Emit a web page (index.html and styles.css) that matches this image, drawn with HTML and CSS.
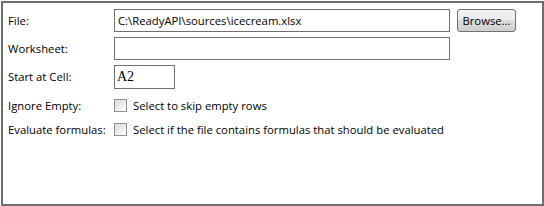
FILE: index.html
```html
<!DOCTYPE html>
<html>
<head>
<meta charset="utf-8">
<link rel="stylesheet" href="styles.css">
</head>
<body>
<div class="panel">
  <div class="form">
    <div class="label">File:</div>
    <div class="field file-row">
      <div class="input wide">C:\ReadyAPI\sources\icecream.xlsx</div>
      <div class="button">Browse...</div>
    </div>

    <div class="label">Worksheet:</div>
    <div class="field">
      <div class="input wide"></div>
    </div>

    <div class="label">Start at Cell:</div>
    <div class="field">
      <div class="input cell">A2</div>
    </div>

    <div class="label check-label">Ignore Empty:</div>
    <div class="field check-field">
      <span class="checkbox"></span>
      <span class="check-text">Select to skip empty rows</span>
    </div>

    <div class="label check-label">Evaluate formulas:</div>
    <div class="field check-field">
      <span class="checkbox"></span>
      <span class="check-text">Select if the file contains formulas that should be evaluated</span>
    </div>
  </div>
</div>
</body>
</html>
```

FILE: styles.css
```css
html, body {
  margin: 0;
  padding: 0;
  background: #ffffff;
}
body {
  font-family: "Open Sans", "Noto Sans", sans-serif;
  font-size: 11.3px;
  color: #000000;
}
.panel {
  margin: 1px 0 0 1px;
  width: 543px;
  height: 205px;
  box-sizing: border-box;
  border: 2px solid #6d6d6d;
  background: #ffffff;
  padding: 6px 0 0 5px;
}
.form {
  display: grid;
  grid-template-columns: 106px auto;
  grid-auto-rows: auto;
  row-gap: 0;
}
.label {
  height: 28px;
  display: flex;
  align-items: center;
  padding-bottom: 5px;
  box-sizing: border-box;
  white-space: nowrap;
}
.field {
  height: 28px;
  display: flex;
  align-items: flex-start;
}
.file-row {
  gap: 7px;
}
.input {
  box-sizing: border-box;
  height: 23px;
  border: 1px solid #707070;
  background: #ffffff;
  display: flex;
  align-items: center;
  padding: 0 0 1px 3px;
  white-space: nowrap;
}
.wide {
  width: 336px;
}
.cell {
  width: 61px;
  height: 24px;
  font-family: "Liberation Serif", serif;
  font-size: 14px;
  padding-left: 2px;
}
.button {
  box-sizing: border-box;
  width: 59px;
  height: 23px;
  border: 1px solid #707070;
  border-radius: 3px;
  background: linear-gradient(#f2f2f2 0%, #ebebeb 45%, #dddddd 50%, #cfcfcf 100%);
  display: flex;
  align-items: center;
  justify-content: center;
  padding-bottom: 1px;
}
.check-label {
  height: 24px;
  padding-bottom: 0;
}
.check-field {
  height: 24px;
  align-items: center;
  gap: 6px;
}
.checkbox {
  box-sizing: border-box;
  width: 13px;
  height: 13px;
  border: 1px solid #8e8f8f;
  background: linear-gradient(135deg, #dcdcdc 0%, #f0f0f0 60%, #fbfbfb 100%);
  flex: none;
}
.check-text {
  white-space: nowrap;
}
```
